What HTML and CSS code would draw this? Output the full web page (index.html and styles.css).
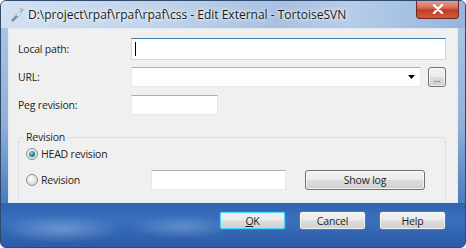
FILE: index.html
```html
<!DOCTYPE html>
<html lang="en">
<head>
    <meta charset="UTF-8">
    <title>Edit External - TortoiseSVN</title>
    <link rel="stylesheet" href="styles.css">
</head>
<body>
    <div class="window">
        <div class="titlebar">
            <svg class="appicon" width="16" height="16" viewBox="0 0 16 16">
                <path d="M2 13 L7 8 L9 10 L4 15 Z" fill="#7d8fa8"/>
                <path d="M7 8 L11 4 L13 6 L9 10 Z" fill="#dfe8f2" stroke="#8a9bb3" stroke-width="0.6"/>
                <circle cx="13" cy="3" r="1.4" fill="#9bb0c8"/>
                <circle cx="11" cy="1.6" r="0.9" fill="#b6c6d8"/>
            </svg>
            <span class="title">D:\project\rpaf\rpaf\rpaf\css - Edit External - TortoiseSVN</span>
            <div class="close">
                <svg width="12" height="10" viewBox="0 0 12 10">
                    <path d="M2 1 L10 9 M10 1 L2 9" stroke="#fff" stroke-width="2.4" stroke-linecap="round"/>
                </svg>
            </div>
        </div>
        <div class="client">
            <div class="row first">
                <label class="lbl">Local path:</label>
                <div class="edit focus path"><span class="caret"></span></div>
            </div>
            <div class="row second">
                <label class="lbl">URL:</label>
                <div class="edit combo">
                    <svg class="arrow" width="7" height="4" viewBox="0 0 7 4"><path d="M0 0 H7 L3.5 4 Z" fill="#000"/></svg>
                </div>
                <button class="btn dots">...</button>
            </div>
            <div class="row third">
                <label class="lbl">Peg revision:</label>
                <div class="edit peg"></div>
            </div>
            <fieldset class="group">
                <legend>Revision</legend>
                <div class="radio-row head">
                    <span class="radio checked"></span>
                    <span>HEAD revision</span>
                </div>
                <div class="radio-row rev">
                    <div class="radio-label">
                        <span class="radio"></span>
                        <span>Revision</span>
                    </div>
                    <div class="edit revnum"></div>
                    <button class="btn showlog">Show log</button>
                </div>
            </fieldset>
        </div>
        <div class="footer">
            <button class="btn dlg default"><u>O</u>K</button>
            <button class="btn dlg">Cancel</button>
            <button class="btn dlg">Help</button>
        </div>
    </div>
</body>
</html>
```

FILE: styles.css
```css
html, body {
    margin: 0;
    padding: 0;
    background: #fff;
}
body {
    font-family: "Open Sans", "Noto Sans", sans-serif;
    font-size: 10.5px;
    letter-spacing: -0.2px;
    color: #1e1e1e;
}
.window {
    width: 466px;
    height: 248px;
    box-sizing: border-box;
    border: 1px solid #2f4a6b;
    border-radius: 6px;
    overflow: hidden;
    display: flex;
    flex-direction: column;
    background: linear-gradient(180deg, #c3d6ec 0%, #a9c3e2 12%, #8fb0d8 50%, #4f7fc0 80%, #2e5ea8 100%);
}
.titlebar {
    height: 27px;
    display: flex;
    align-items: center;
    position: relative;
    background: linear-gradient(100deg, #d3e1f1 0%, #bfd3ea 35%, #a7c1e1 60%, #b6cde8 75%, #95b4dc 100%);
}
.appicon {
    margin: 0 3px 0 8px;
}
.title {
    font-size: 12px;
    letter-spacing: 0;
    color: #1a1a1a;
    text-shadow: 0 0 6px #fff, 0 0 3px #fff;
    white-space: nowrap;
}
.close {
    position: absolute;
    top: -1px;
    right: 6px;
    width: 43px;
    height: 19px;
    box-sizing: border-box;
    border: 1px solid #6b2a24;
    border-top: none;
    border-radius: 0 0 4px 4px;
    background: linear-gradient(180deg, #e8a493 0%, #d66a55 45%, #c13c24 55%, #d2583c 100%);
    display: flex;
    align-items: center;
    justify-content: center;
}
.client {
    margin: 0 7px;
    height: 175px;
    box-sizing: border-box;
    border: 1px solid #e2eaf4;
    background: #f0f0f0;
    padding: 9px 11px 0 9px;
    overflow: hidden;
}
.row {
    display: flex;
    align-items: center;
}
.row.second {
    margin-top: 7px;
}
.row.third {
    margin-top: 8px;
}
.lbl {
    width: 113px;
    flex: none;
}
.edit {
    box-sizing: border-box;
    height: 20px;
    background: #fff;
    border: 1px solid #e3e9ef;
    border-top-color: #abadb3;
    position: relative;
}
.edit.path {
    width: 317px;
    height: 22px;
}
.edit.focus {
    border-color: #c5daed;
    border-top-color: #3d7bad;
}
.caret {
    position: absolute;
    left: 3px;
    top: 3px;
    width: 1px;
    height: 14px;
    background: #000;
}
.edit.combo {
    width: 292px;
}
.arrow {
    position: absolute;
    right: 5px;
    top: 7px;
}
.edit.peg {
    width: 87px;
}
.btn {
    font-family: inherit;
    font-size: 10.5px;
    letter-spacing: -0.2px;
    color: #1e1e1e;
    box-sizing: border-box;
    border: 1px solid #707070;
    border-radius: 3px;
    background: linear-gradient(180deg, #f2f2f2 0%, #ebebeb 48%, #dddddd 52%, #cfcfcf 100%);
    box-shadow: inset 0 0 0 1px rgba(255, 255, 255, 0.7);
    padding: 0;
    cursor: pointer;
}
.btn.dots {
    width: 18px;
    height: 20px;
    margin-left: 7px;
    line-height: 12px;
    padding-top: 4px;
    font-size: 9px;
    color: #333;
}
.group {
    margin: 15px 0 0 0;
    padding: 0 0 0 7px;
    height: 90px;
    border: 1px solid #d5dfe5;
    border-radius: 3px;
    box-sizing: border-box;
}
.group legend {
    margin-left: -2px;
    padding: 0 2px;
    line-height: 15px;
}
.radio-row {
    display: flex;
    align-items: center;
}
.radio-row.head {
    margin-top: 2px;
    height: 14px;
}
.radio-row.rev {
    margin-top: 9px;
}
.radio-label {
    width: 125px;
    display: flex;
    align-items: center;
}
.radio {
    width: 12px;
    height: 12px;
    box-sizing: border-box;
    border-radius: 50%;
    border: 1px solid #8f8f8f;
    background: radial-gradient(circle at 40% 35%, #ffffff 0%, #e6e6e6 50%, #c8c8c8 100%);
    margin-right: 3px;
    position: relative;
    flex: none;
}
.radio.checked::after {
    content: "";
    position: absolute;
    left: 2px;
    top: 2px;
    width: 6px;
    height: 6px;
    border-radius: 50%;
    background: radial-gradient(circle at 40% 35%, #8ee0f7 0%, #2f88b8 45%, #0f4a73 100%);
}
.edit.revnum {
    width: 135px;
}
.btn.showlog {
    width: 120px;
    height: 20px;
    margin-left: 19px;
}
.footer {
    flex: 1;
    display: flex;
    justify-content: flex-end;
    align-items: flex-start;
    padding: 8px 19px 0 0;
    gap: 13px;
    background:
        radial-gradient(ellipse 60px 14px at 60px 26px, rgba(170, 200, 240, 0.45), transparent),
        radial-gradient(ellipse 50px 12px at 180px 24px, rgba(170, 200, 240, 0.35), transparent),
        linear-gradient(180deg, #2f63b2 0%, #3a70bd 40%, #2a5ba6 100%);
}
.btn.dlg {
    width: 67px;
    height: 19px;
}
.btn.default {
    border-color: #3c7fb1;
    box-shadow: inset 0 0 0 1px #48d8fb;
}
```
